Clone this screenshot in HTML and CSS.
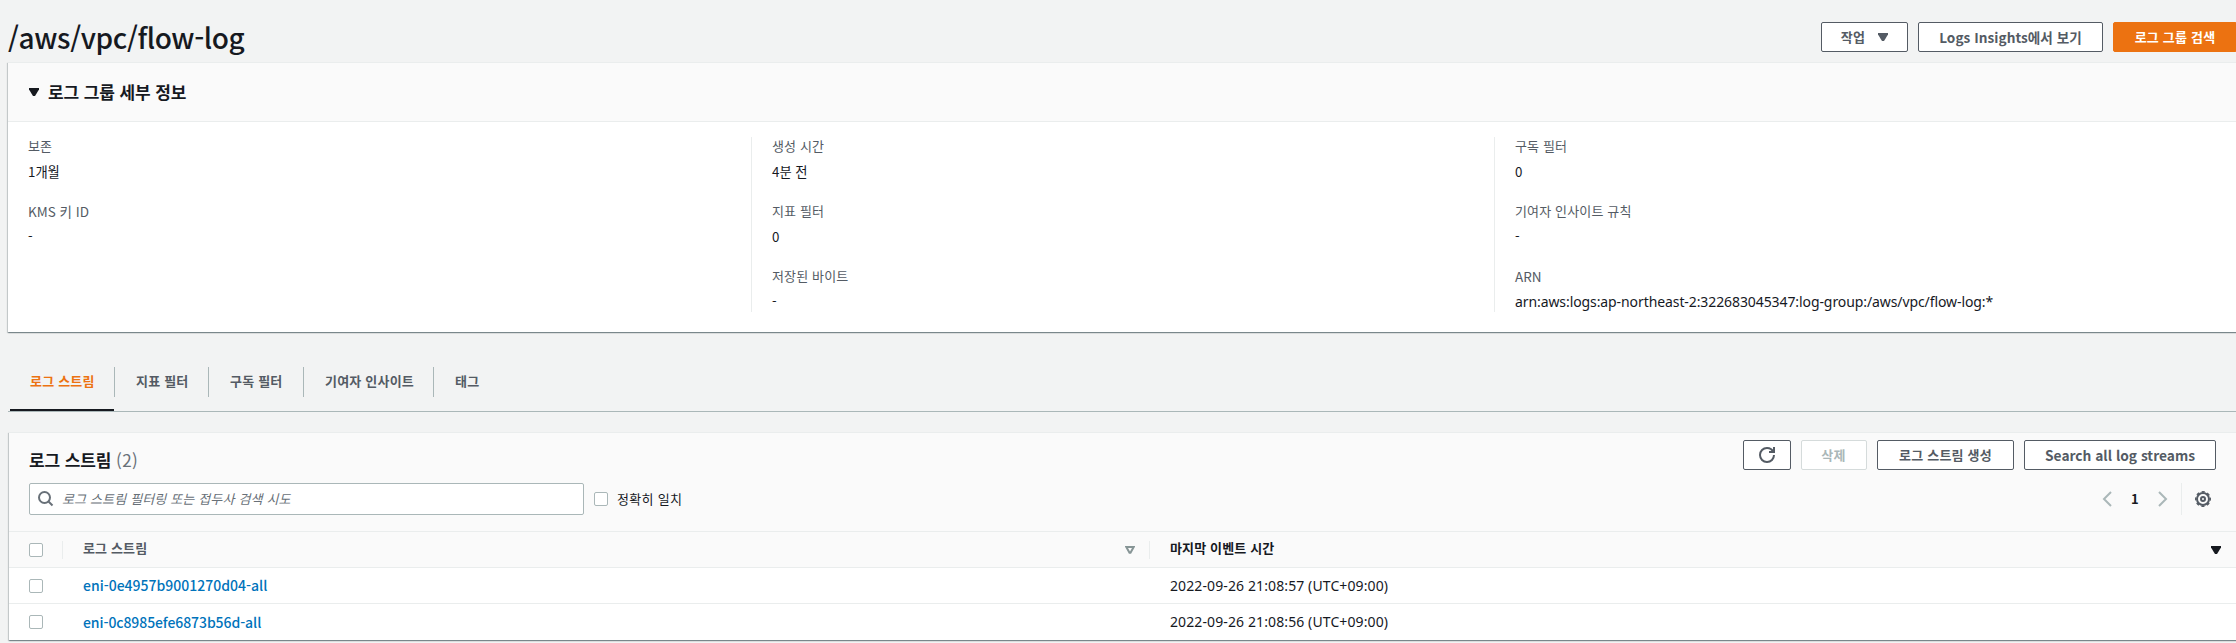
FILE: index.html
```
<!DOCTYPE html>
<html lang="ko">
<head>
<meta charset="utf-8">
<title>/aws/vpc/flow-log</title>
<link rel="stylesheet" href="styles.css">
</head>
<body>
<main class="page">
  <header class="page-header">
    <h1 class="page-title">/aws/vpc/flow-log</h1>
    <div class="actions">
      <button class="btn btn-menu">작업<svg class="caret" width="10" height="8" viewBox="0 0 10 8"><path d="M0 0h10v1.5L6 8H4L0 1.5z" fill="currentColor"/></svg></button>
      <button class="btn btn-insights">Logs Insights에서 보기</button>
      <button class="btn btn-primary">로그 그룹 검색</button>
    </div>
  </header>

  <section class="card details">
    <div class="details-header">
      <svg class="caret" width="10" height="8" viewBox="0 0 10 8"><path d="M0 0h10v1.5L6 8H4L0 1.5z" fill="currentColor"/></svg>
      <h2 class="heading">로그 그룹 세부 정보</h2>
    </div>
    <div class="details-body">
      <dl class="column">
        <div class="field"><dt>보존</dt><dd>1개월</dd></div>
        <div class="field latin-label"><dt>KMS 키 ID</dt><dd>-</dd></div>
      </dl>
      <dl class="column">
        <div class="field"><dt>생성 시간</dt><dd>4분 전</dd></div>
        <div class="field"><dt>지표 필터</dt><dd>0</dd></div>
        <div class="field"><dt>저장된 바이트</dt><dd>-</dd></div>
      </dl>
      <dl class="column">
        <div class="field"><dt>구독 필터</dt><dd>0</dd></div>
        <div class="field"><dt>기여자 인사이트 규칙</dt><dd>-</dd></div>
        <div class="field latin-label"><dt>ARN</dt><dd class="arn">arn:aws:logs:ap-northeast-2:322683045347:log-group:/aws/vpc/flow-log:*</dd></div>
      </dl>
    </div>
  </section>

  <nav class="tabs">
    <a class="tab active">로그 스트림</a>
    <a class="tab tab-metric">지표 필터</a>
    <a class="tab tab-subscription">구독 필터</a>
    <a class="tab tab-insight">기여자 인사이트</a>
    <a class="tab">태그</a>
  </nav>

  <section class="card streams">
    <div class="streams-header">
      <div class="streams-left">
        <h2 class="heading">로그 스트림 <span class="count">(2)</span></h2>
        <div class="filter">
          <div class="search">
            <svg width="16" height="16" viewBox="0 0 16 16" fill="none" stroke="#687078" stroke-width="2"><circle cx="6.500" cy="6.500" r="5.500"/><path d="M10.500 10.500l4 4"/></svg>
            <span class="placeholder">로그 스트림 필터링 또는 접두사 검색 시도</span>
          </div>
          <span class="checkbox"></span>
          <span class="check-label">정확히 일치</span>
        </div>
      </div>
      <div class="streams-right">
        <div class="actions">
          <button class="btn btn-icon"><svg width="16" height="16" viewBox="0 0 16 16" fill="none" stroke="currentColor" stroke-width="2"><path d="M10 5h5V0"/><path d="M15 8a6.96 6.96 0 0 1-7 7 6.96 6.96 0 0 1-7-7 6.96 6.96 0 0 1 7-7 6.87 6.87 0 0 1 6.3 4"/></svg></button>
          <button class="btn btn-delete">삭제</button>
          <button class="btn btn-create">로그 스트림 생성</button>
          <button class="btn btn-search-all">Search all log streams</button>
        </div>
        <div class="pager">
          <svg width="10" height="16" viewBox="0 0 10 16" fill="none" stroke="#aab7b8" stroke-width="2"><path d="M9 1L2 8l7 7"/></svg>
          <span class="page-number">1</span>
          <svg width="10" height="16" viewBox="0 0 10 16" fill="none" stroke="#aab7b8" stroke-width="2"><path d="M1 1l7 7-7 7"/></svg>
          <span class="settings">
            <svg width="16" height="16" viewBox="0 0 16 16" fill="none" stroke="#545b64"><circle cx="8" cy="8" r="2" stroke-width="2"/><circle cx="8" cy="8" r="6" stroke-width="2"/><circle cx="8" cy="8" r="7.300" stroke-width="1.400" stroke-dasharray="3.200 2.533" stroke-dashoffset="1.600"/></svg>
          </span>
        </div>
      </div>
    </div>
    <div class="row row-head">
      <div class="cell-check"><span class="checkbox"></span></div>
      <div class="cell-name head-name"><span class="head-label">로그 스트림</span><svg width="10" height="8" viewBox="0 0 10 8"><path d="M1.300 1h7.400L5.500 6.800h-1z" fill="none" stroke="#879596" stroke-width="2"/></svg></div>
      <div class="cell-time head-time"><span class="head-label">마지막 이벤트 시간</span><svg class="caret" width="10" height="8" viewBox="0 0 10 8"><path d="M0 0h10v1.500L6 8H4L0 1.500z" fill="currentColor"/></svg></div>
    </div>
    <div class="row">
      <div class="cell-check"><span class="checkbox"></span></div>
      <div class="cell-name"><a class="link">eni-0e4957b9001270d04-all</a></div>
      <div class="cell-time">2022-09-26 21:08:57 (UTC+09:00)</div>
    </div>
    <div class="row">
      <div class="cell-check"><span class="checkbox"></span></div>
      <div class="cell-name"><a class="link link-tight">eni-0c8985efe6873b56d-all</a></div>
      <div class="cell-time">2022-09-26 21:08:56 (UTC+09:00)</div>
    </div>
  </section>
</main>
</body>
</html>
```
FILE: styles.css
```
* { box-sizing: border-box; }

body {
  margin: 0;
  height: 643px;
  overflow: hidden;
  background: #f2f3f3;
  color: #16191f;
  font: 400 13px/22px "Noto Sans CJK KR", "Noto Sans", sans-serif;
  letter-spacing: 0.150px;
  white-space: nowrap;
}

h1, h2, dl, dd { margin: 0; }
svg { display: block; flex: none; }

.page {
  width: 2229px;
  margin-left: 8px;
}

.page-header {
  display: flex;
  justify-content: space-between;
  height: 62px;
  padding-top: 22px;
}

.page-title {
  height: 36px;
  margin-top: -3px;
  font-size: 28px;
  font-weight: 500;
  line-height: 36px;
  letter-spacing: -0.400px;
}

.actions {
  display: flex;
  gap: 10px;
}

.btn {
  display: flex;
  align-items: center;
  justify-content: center;
  height: 30px;
  padding: 0 0 1px;
  border: 1px solid #545b64;
  border-radius: 2px;
  background: #fff;
  color: #545b64;
  font: inherit;
  font-weight: 700;
  letter-spacing: 0.200px;
}

.btn-menu { width: 87px; gap: 13px; }
.btn-insights { width: 185px; font-size: 13.600px; letter-spacing: 0.050px; }
.btn-primary { width: 124px; background: #ec7211; border-color: #ec7211; color: #fff; }
.btn-icon { width: 48px; padding: 0; }
.btn-delete { width: 66px; border-color: #d5dbdb; color: #aab7b8; padding-right: 1px; }
.btn-create { width: 137px; }
.btn-search-all { width: 192px; font-size: 13.750px; letter-spacing: 0; }

.card {
  border-top: 1px solid #eaeded;
  background: #fff;
  box-shadow: 0 1px 1px 0 rgba(0, 28, 36, .3), 1px 1px 1px 0 rgba(0, 28, 36, .15), -1px 1px 1px 0 rgba(0, 28, 36, .15);
}

.heading {
  font-size: 17px;
  font-weight: 700;
  line-height: 22px;
  letter-spacing: -0.100px;
}

.details-header {
  display: flex;
  align-items: center;
  gap: 9px;
  height: 59px;
  padding: 0 21px;
  border-bottom: 1px solid #eaeded;
  background: #fafafa;
}

.details-body {
  display: grid;
  grid-template-columns: repeat(3, 743px);
  padding: 15px 0 20px;
}

.column {
  display: flex;
  flex-direction: column;
  gap: 15px;
  height: 175px;
  padding-left: 20px;
}

.column + .column { border-left: 1px solid #eaeded; }

.field {
  display: flex;
  flex: none;
  flex-direction: column;
  gap: 4px;
  height: 50px;
}

.field:first-child { margin-top: -2px; }
.field dt { color: #545b64; }
.latin-label dt { font-size: 13.500px; letter-spacing: 0; }
.field dd { font-size: 13.300px; letter-spacing: 0; }
.field .arn {
  font-family: "Noto Sans", sans-serif;
  font-size: 14px;
  letter-spacing: -0.090px;
}

.tabs {
  display: flex;
  align-items: center;
  height: 80px;
  padding: 20px 0 0 2px;
  border-bottom: 1px solid #aab7b8;
  color: #545b64;
  font-weight: 700;
}

.tab {
  position: relative;
  height: 30px;
  padding: 3px 0 0 21px;
  border-right: 1px solid #aab7b8;
  letter-spacing: 0.200px;
}

.tab:last-child { border-right: 0; }
.tab-metric { width: 94px; }
.tab-subscription { width: 95px; }
.tab-insight { width: 130px; }

.tab.active {
  width: 105px;
  padding-left: 20px;
  color: #ec7211;
}

.tab.active::after {
  content: "";
  position: absolute;
  left: 0;
  right: 0;
  top: 42px;
  height: 2px;
  background: #16191f;
}

.streams {
  margin: 20px 0 0 1px;
}

.streams-header {
  display: flex;
  justify-content: space-between;
  height: 99px;
  padding: 7px 21px 0 20px;
  border-bottom: 1px solid #eaeded;
  background: #fafafa;
}

.streams-left .heading { padding-top: 9px; }
.count { color: #687078; font-weight: 400; letter-spacing: 0.400px; }

.filter {
  display: flex;
  align-items: center;
  margin-top: 12px;
}

.search {
  display: flex;
  align-items: center;
  gap: 9px;
  width: 555px;
  height: 32px;
  margin-right: 10px;
  padding-left: 8px;
  border: 1px solid #aab7b8;
  border-radius: 2px;
  background: #fff;
}

.placeholder {
  margin-left: -1px;
  color: #687078;
  font-style: italic;
}

.checkbox {
  display: block;
  width: 14px;
  height: 14px;
  border: 1px solid #aab7b8;
  border-radius: 2px;
  background: #fff;
}

.check-label { margin-left: 9px; letter-spacing: 0.300px; }

.pager {
  display: flex;
  align-items: center;
  justify-content: flex-end;
  margin-top: 13px;
  height: 32px;
}

.page-number {
  width: 46px;
  text-align: center;
  font-weight: 700;
}

.settings {
  display: flex;
  align-items: center;
  height: 32px;
  margin-left: 13px;
  padding: 0 5px 0 13px;
  border-left: 1px solid #eaeded;
}

.row {
  display: flex;
  align-items: center;
  height: 36px;
  border-bottom: 1px solid #eaeded;
}

.row:last-child { border-bottom: 0; }
.row-head { background: #fafafa; font-weight: 700; }

.cell-check { width: 53px; padding-left: 20px; }
.cell-name { width: 1087px; padding-left: 21px; }
.cell-time {
  flex: 1;
  padding-left: 21px;
  font-family: "Noto Sans", "Noto Sans CJK KR", sans-serif;
  font-size: 14px;
  letter-spacing: 0.110px;
}

.head-name, .head-time {
  display: flex;
  align-items: center;
  justify-content: space-between;
  height: 18px;
  border-left: 1px solid #eaeded;
  font-family: inherit;
  font-size: 13px;
  letter-spacing: 0.150px;
}

.head-name { padding: 0 14px 0 20px; color: #545b64; }
.head-time { padding: 0 16px 0 20px; }
.head-label { padding-bottom: 3px; }

.link {
  color: #0073bb;
  font-size: 14px;
  font-weight: 500;
  letter-spacing: 0;
}

.link-tight { letter-spacing: -0.080px; }
```
